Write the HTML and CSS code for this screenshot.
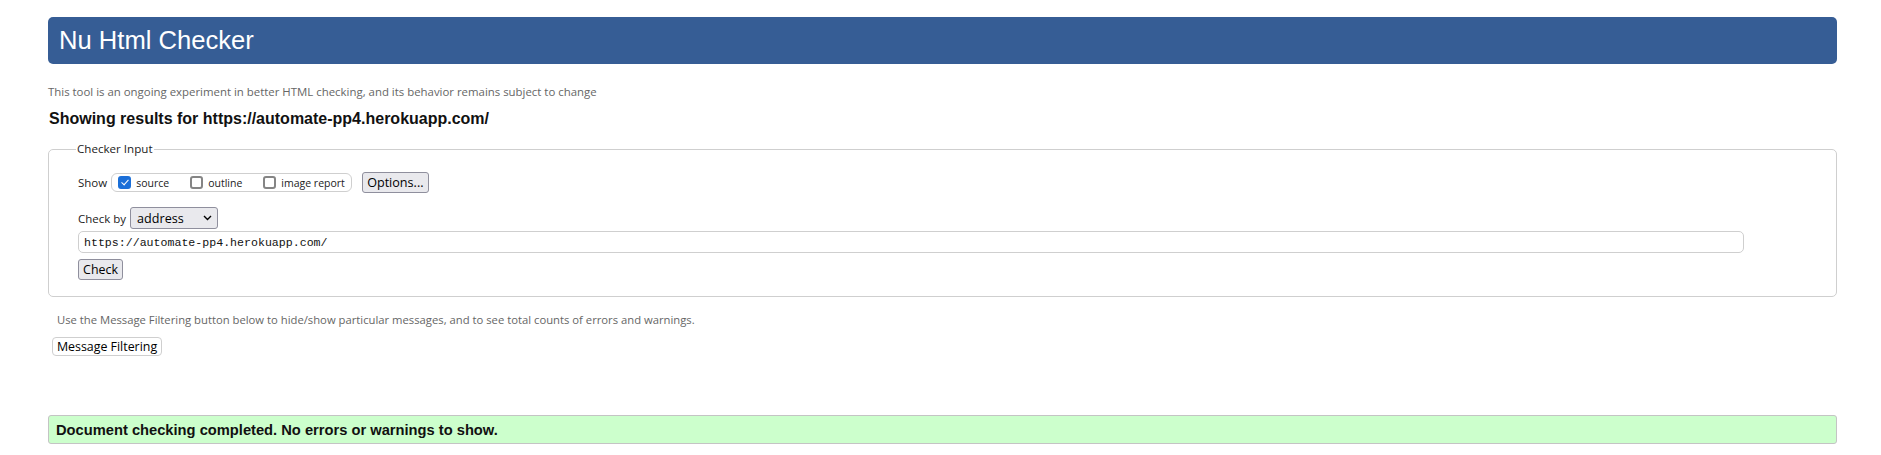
FILE: index.html
```html
<!DOCTYPE html>
<html>
<head>
<meta charset="utf-8">
<title>Nu Html Checker</title>
<link rel="stylesheet" href="styles.css">
</head>
<body>
<div class="page">
  <header class="masthead"><h1>Nu Html Checker</h1></header>
  <p class="intro">This tool is an ongoing experiment in better HTML checking, and its behavior remains subject to change</p>
  <p class="results-for">Showing results for https://automate-pp4.herokuapp.com/</p>
  <form class="checker">
    <fieldset class="fs">
      <legend class="legend">Checker Input</legend>
      <div class="row show-row">
        <span class="label">Show</span>
        <span class="pill">
          <label class="opt"><input type="checkbox" class="cb" checked><span>source</span></label>
          <label class="opt"><input type="checkbox" class="cb"><span>outline</span></label>
          <label class="opt"><input type="checkbox" class="cb"><span>image report</span></label>
        </span>
        <button type="button" class="btn btn-options">Options...</button>
      </div>
      <div class="row by-row">
        <span class="label">Check by</span>
        <span class="select"><span>address</span><svg class="chev" width="9" height="6" viewBox="0 0 9 6"><path d="M1 1 L4.5 4.5 L8 1" fill="none" stroke="#000" stroke-width="1.4"/></svg></span>
      </div>
      <div class="url">https://automate-pp4.herokuapp.com/</div>
      <button type="button" class="btn btn-check">Check</button>
    </fieldset>
  </form>
  <p class="filter-note">Use the Message Filtering button below to hide/show particular messages, and to see total counts of errors and warnings.</p>
  <button type="button" class="btn-filter">Message Filtering</button>
  <div class="success">Document checking completed. No errors or warnings to show.</div>
</div>
</body>
</html>
```

FILE: styles.css
```css
html, body {
  margin: 0;
  padding: 0;
  background: #fff;
}
.page {
  padding: 17px 44px 0 48px;
  font-family: "Open Sans", "Noto Sans", sans-serif;
}
.masthead {
  background: #365d95;
  border-radius: 5px;
  height: 47px;
  display: flex;
  align-items: center;
  padding-left: 11px;
}
.masthead h1 {
  margin: 0;
  font-family: "Liberation Sans", Arial, sans-serif;
  font-weight: normal;
  font-size: 25.6px;
  color: #fff;
}
.intro {
  margin: 21px 0 0 0;
  font-size: 11.42px;
  line-height: 14px;
  color: #666;
  white-space: nowrap;
}
.results-for {
  margin: 11px 0 0 1px;
  font-family: "Liberation Sans", Arial, sans-serif;
  font-weight: bold;
  font-size: 16px;
  line-height: 18px;
  color: #111;
}
.checker {
  margin: 14px 0 0 0;
}
.fs {
  margin: 0;
  border: 1px solid #cfcfcf;
  border-radius: 5px;
  padding: 16px 0 16px 29px;
  min-width: 0;
}
.legend {
  font-size: 11.6px;
  line-height: 14px;
  padding: 0 1px;
  margin-left: -2px;
  color: #222;
}
.row {
  display: flex;
  align-items: center;
}
.label {
  font-size: 11.5px;
  color: #222;
}
.show-row {
  height: 21px;
}
.pill {
  display: flex;
  align-items: center;
  height: 17px;
  margin-left: 4px;
  border: 1px solid #cfcfcf;
  border-radius: 6px;
  padding: 0 6px 0 6px;
}
.opt {
  display: flex;
  align-items: center;
  font-size: 10.5px;
  color: #222;
  margin-right: 21px;
}
.opt:last-child {
  margin-right: 0;
}
.cb {
  appearance: none;
  -webkit-appearance: none;
  box-sizing: border-box;
  margin: 0 5px 0 0;
  width: 13px;
  height: 13px;
  border: 2px solid #858585;
  border-radius: 3px;
  background: #fff;
  position: relative;
}
.cb:checked {
  background: #1b6fd8;
  border-color: #1b6fd8;
}
.cb:checked::after {
  content: "";
  position: absolute;
  left: 3px;
  top: 0px;
  width: 3px;
  height: 6px;
  border: solid #fff;
  border-width: 0 1.8px 1.8px 0;
  transform: rotate(42deg);
}
.btn {
  font-family: "Open Sans", "Noto Sans", sans-serif;
  background: #e9e9ed;
  border: 1px solid #8f8f9d;
  border-radius: 3px;
  color: #000;
  padding: 0;
  display: flex;
  align-items: center;
  justify-content: center;
  white-space: nowrap;
}
.btn-options {
  margin-left: 10px;
  width: 67px;
  height: 21px;
  font-size: 12.6px;
}
.by-row {
  margin-top: 14px;
  height: 22px;
}
.select {
  margin-left: 4px;
  width: 88px;
  height: 22px;
  box-sizing: border-box;
  background: #e9e9ed;
  border: 1px solid #8f8f9d;
  border-radius: 3px;
  display: flex;
  align-items: center;
  justify-content: space-between;
  padding: 0 5px 0 6px;
  font-size: 12.6px;
  color: #000;
}
.url {
  margin-top: 2px;
  height: 22px;
  box-sizing: border-box;
  width: 1666px;
  border: 1px solid #cfcfcf;
  border-radius: 5px;
  padding-left: 5px;
  display: flex;
  align-items: center;
  font-family: "Liberation Mono", "DejaVu Sans Mono", monospace;
  font-size: 11.6px;
  color: #111;
}
.btn-check {
  margin-top: 6px;
  width: 45px;
  height: 21px;
  font-size: 12.4px;
}
.filter-note {
  margin: 16px 0 0 9px;
  font-size: 11.27px;
  line-height: 14px;
  color: #666;
  white-space: nowrap;
}
.btn-filter {
  display: flex;
  align-items: center;
  justify-content: center;
  margin: 10px 0 0 4px;
  width: 110px;
  height: 19px;
  padding: 0;
  background: #fff;
  border: 1px solid #cfcfcf;
  border-radius: 4px;
  font-family: "Open Sans", "Noto Sans", sans-serif;
  font-size: 12.4px;
  color: #000;
  white-space: nowrap;
}
.success {
  margin-top: 59px;
  height: 29px;
  box-sizing: border-box;
  background: #ccffcc;
  border: 1px solid #c4c4c4;
  border-radius: 3px;
  display: flex;
  align-items: center;
  padding-left: 7px;
  font-family: "Liberation Sans", Arial, sans-serif;
  font-weight: bold;
  font-size: 14.7px;
  color: #111;
}
```
